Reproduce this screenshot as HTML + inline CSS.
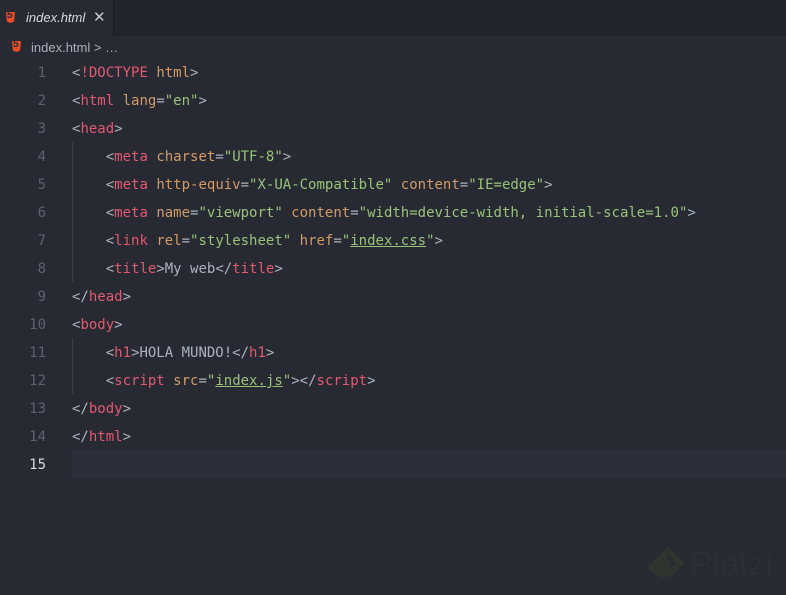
<!DOCTYPE html>
<html><head><style>
body{margin:0;width:786px;height:595px;background:#272a33;overflow:hidden;font-family:"Liberation Sans",sans-serif;position:relative}
.tabbar{position:absolute;left:0;top:0;width:786px;height:36px;background:#21242b}
.tab{position:absolute;left:0;top:0;width:113px;height:36px;background:#272a33;border-right:1px solid #181a1f}
.tab .n{position:absolute;left:26px;top:10px;font-size:13px;font-style:italic;color:#d7dae0}
.tab .x{position:absolute;left:93px;top:8px;font-size:15px;color:#c5c8ce}
.ic{position:absolute;width:9px;height:11px;background:#e44d26;clip-path:polygon(0 0,100% 0,90% 88%,50% 100%,10% 88%);}
.ic:after{content:"5";position:absolute;left:1px;top:-2px;font-size:10px;font-weight:bold;color:#272a33;font-family:"Liberation Sans"}
.crumb{position:absolute;left:31px;top:40px;font-size:13px;color:#a9afba}
.code{position:absolute;left:0;top:59px;font-family:"DejaVu Sans Mono",monospace;font-size:14px}
.l{height:28px;line-height:28px;position:relative;white-space:pre;color:#abb2bf}
.ln{position:absolute;left:0;width:46px;text-align:right;color:#5c6370}
.tx{position:absolute;left:72px}
.t{color:#e5586e}.a{color:#d19a66}.s{color:#98c379}
.u{text-decoration:underline}
.guide{position:absolute;left:72px;width:1px;background:#3b4048}
</style></head><body>
<div class="tabbar"><div class="tab"><div class="ic" style="left:6px;top:12px"></div><span class="n">index.html</span><span class="x">✕</span></div></div>
<div class="ic" style="left:12px;top:41px"></div>
<div class="crumb">index.html &gt; …</div>
<div class="guide" style="top:142px;height:140px"></div>
<div class="guide" style="top:338px;height:56px"></div>
<div class="code">
<div class="l"><span class="ln">1</span><span class="tx">&lt;<span class="t">!DOCTYPE</span> <span class="a">html</span>&gt;</span></div>
<div class="l"><span class="ln">2</span><span class="tx">&lt;<span class="t">html</span> <span class="a">lang</span>=<span class="s">"en"</span>&gt;</span></div>
<div class="l"><span class="ln">3</span><span class="tx">&lt;<span class="t">head</span>&gt;</span></div>
<div class="l"><span class="ln">4</span><span class="tx">    &lt;<span class="t">meta</span> <span class="a">charset</span>=<span class="s">"UTF-8"</span>&gt;</span></div>
<div class="l"><span class="ln">5</span><span class="tx">    &lt;<span class="t">meta</span> <span class="a">http-equiv</span>=<span class="s">"X-UA-Compatible"</span> <span class="a">content</span>=<span class="s">"IE=edge"</span>&gt;</span></div>
<div class="l"><span class="ln">6</span><span class="tx">    &lt;<span class="t">meta</span> <span class="a">name</span>=<span class="s">"viewport"</span> <span class="a">content</span>=<span class="s">"width=device-width, initial-scale=1.0"</span>&gt;</span></div>
<div class="l"><span class="ln">7</span><span class="tx">    &lt;<span class="t">link</span> <span class="a">rel</span>=<span class="s">"stylesheet"</span> <span class="a">href</span>=<span class="s">"<span class="u">index.css</span>"</span>&gt;</span></div>
<div class="l"><span class="ln">8</span><span class="tx">    &lt;<span class="t">title</span>&gt;My web&lt;/<span class="t">title</span>&gt;</span></div>
<div class="l"><span class="ln">9</span><span class="tx">&lt;/<span class="t">head</span>&gt;</span></div>
<div class="l"><span class="ln">10</span><span class="tx">&lt;<span class="t">body</span>&gt;</span></div>
<div class="l"><span class="ln">11</span><span class="tx">    &lt;<span class="t">h1</span>&gt;HOLA MUNDO!&lt;/<span class="t">h1</span>&gt;</span></div>
<div class="l"><span class="ln">12</span><span class="tx">    &lt;<span class="t">script</span> <span class="a">src</span>=<span class="s">"<span class="u">index.js</span>"</span>&gt;&lt;/<span class="t">script</span>&gt;</span></div>
<div class="l"><span class="ln">13</span><span class="tx">&lt;/<span class="t">body</span>&gt;</span></div>
<div class="l"><span class="ln">14</span><span class="tx">&lt;/<span class="t">html</span>&gt;</span></div>
<div class="l"><span style="position:absolute;left:72px;width:714px;top:-1px;bottom:1px;background:#2c2f3a"></span><span class="ln" style="color:#d7dae0">15</span></div>
</div>
<svg style="position:absolute;left:646px;top:545px" width="40" height="42" viewBox="0 0 40 42"><path d="M20 4 L34 18 L24 28 L18 22 L22 18 L20 16 L12 24 L20 32 M14 30 L6 22 L20 8" fill="none" stroke="#2e352f" stroke-width="6"/></svg>
<div style="position:absolute;left:690px;top:545px;font-size:34px;color:#2a2e37">Platzi</div>
</body></html>
